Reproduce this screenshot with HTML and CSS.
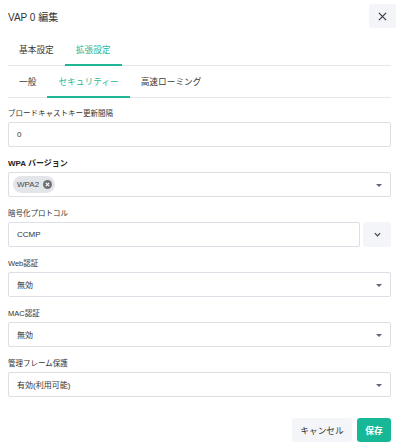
FILE: index.html
```html
<!DOCTYPE html>
<html lang="ja">
<head>
    <meta charset="UTF-8">
    <title>VAP 0 編集</title>
    <link rel="stylesheet" href="styles.css">
</head>
<body>
    <div class="dialog">
        <div class="dialog-header">
            <div class="dialog-title">VAP 0 編集</div>
            <button class="close-button">
                <svg width="9" height="9" viewBox="0 0 10 10"><path d="M1 1L9 9M9 1L1 9" stroke="#3a3f4b" stroke-width="1.4"/></svg>
            </button>
        </div>

        <div class="tabs tabs-main">
            <div class="tab">基本設定</div>
            <div class="tab active">拡張設定</div>
        </div>
        <div class="tabs tabs-sub">
            <div class="tab">一般</div>
            <div class="tab active">セキュリティー</div>
            <div class="tab">高速ローミング</div>
        </div>

        <div class="form">
            <div class="field">
                <label class="field-label">ブロードキャストキー更新間隔</label>
                <div class="control">0</div>
            </div>
            <div class="field">
                <label class="field-label bold">WPA バージョン</label>
                <div class="control select">
                    <span class="chip">WPA2<span class="chip-close">
                        <svg width="5" height="5" viewBox="0 0 6 6"><path d="M1 1L5 5M5 1L1 5" stroke="#fff" stroke-width="1.3"/></svg>
                    </span></span>
                    <span class="caret"></span>
                </div>
            </div>
            <div class="field">
                <label class="field-label">暗号化プロトコル</label>
                <div class="control-row">
                    <div class="control">CCMP</div>
                    <button class="side-button">
                        <svg width="7" height="5" viewBox="0 0 8 5"><path d="M1 1L4 4L7 1" fill="none" stroke="#3a3f4b" stroke-width="1.4"/></svg>
                    </button>
                </div>
            </div>
            <div class="field">
                <label class="field-label">Web認証</label>
                <div class="control select">無効<span class="caret"></span></div>
            </div>
            <div class="field">
                <label class="field-label">MAC認証</label>
                <div class="control select">無効<span class="caret"></span></div>
            </div>
            <div class="field">
                <label class="field-label">管理フレーム保護</label>
                <div class="control select">有効(利用可能)<span class="caret"></span></div>
            </div>
        </div>

        <div class="dialog-footer">
            <button class="btn btn-cancel">キャンセル</button>
            <button class="btn btn-save">保存</button>
        </div>
    </div>
</body>
</html>
```

FILE: styles.css
```css
body {
    margin: 0;
    background: #ffffff;
    font-family: "Liberation Sans", "Noto Sans CJK JP", sans-serif;
    color: #333333;
}
.dialog {
    padding: 4px 6px 0 8px;
}
.dialog-header {
    display: flex;
    justify-content: space-between;
    align-items: center;
    margin-right: -5px;
}
.dialog-title {
    font-size: 10px;
    color: #333333;
}
.close-button {
    width: 27px;
    height: 24px;
    border: none;
    border-radius: 3px;
    background: #f4f5f8;
    display: flex;
    align-items: center;
    justify-content: center;
    padding: 0;
}
.tabs {
    display: flex;
    border-bottom: 1px solid #e6e8ec;
}
.tabs-main {
    margin-top: 7px;
}
.tab {
    padding: 0 11px;
    font-size: 8.7px;
    color: #3b3b3b;
    display: flex;
    align-items: center;
    margin-bottom: -1px;
    border-bottom: 2px solid transparent;
}
.tabs-main .tab {
    height: 29px;
}
.tabs-sub .tab {
    height: 30px;
}
.tab.active {
    color: #1fb897;
    border-bottom-color: #1fb897;
}
.form {
    padding-top: 10px;
}
.field {
    height: 50px;
}
.field:last-child {
    height: 39px;
}
.field-label {
    display: block;
    font-size: 7.5px;
    line-height: 12px;
    margin-bottom: 2px;
    color: #333333;
}
.field-label.bold {
    font-weight: 700;
    font-size: 8px;
    color: #222222;
}
.control {
    height: 25px;
    box-sizing: border-box;
    border: 1px solid #dcdfe6;
    border-radius: 2px;
    padding: 0 8px;
    font-size: 8px;
    color: #333333;
    display: flex;
    align-items: center;
    position: relative;
}
.select {
    padding-right: 20px;
}
.caret {
    position: absolute;
    right: 8px;
    top: 11px;
    width: 0;
    height: 0;
    border-left: 3px solid transparent;
    border-right: 3px solid transparent;
    border-top: 3px solid #5f6879;
}
.chip {
    display: flex;
    align-items: center;
    gap: 4px;
    height: 17px;
    padding: 0 3px 0 4px;
    margin-left: -4px;
    border-radius: 9px;
    background: #e3e5e8;
    font-size: 8px;
    color: #444444;
}
.chip-close {
    width: 9px;
    height: 9px;
    border-radius: 50%;
    background: #6e7278;
    display: flex;
    align-items: center;
    justify-content: center;
}
.control-row {
    display: flex;
    gap: 3px;
}
.control-row .control {
    flex: 1;
}
.side-button {
    width: 28px;
    height: 25px;
    border: none;
    border-radius: 3px;
    background: #f4f5f8;
    display: flex;
    align-items: center;
    justify-content: center;
    padding: 0;
}
.dialog-footer {
    display: flex;
    justify-content: flex-end;
    gap: 5px;
    margin-top: 21px;
}
.btn {
    height: 24px;
    border: none;
    border-radius: 3px;
    font-family: "Liberation Sans", "Noto Sans CJK JP", sans-serif;
    font-size: 8.7px;
    padding: 0;
}
.btn-cancel {
    width: 60px;
    background: #f4f5f8;
    color: #333333;
}
.btn-save {
    width: 34px;
    background: #17b897;
    color: #ffffff;
    font-weight: 700;
}
```
